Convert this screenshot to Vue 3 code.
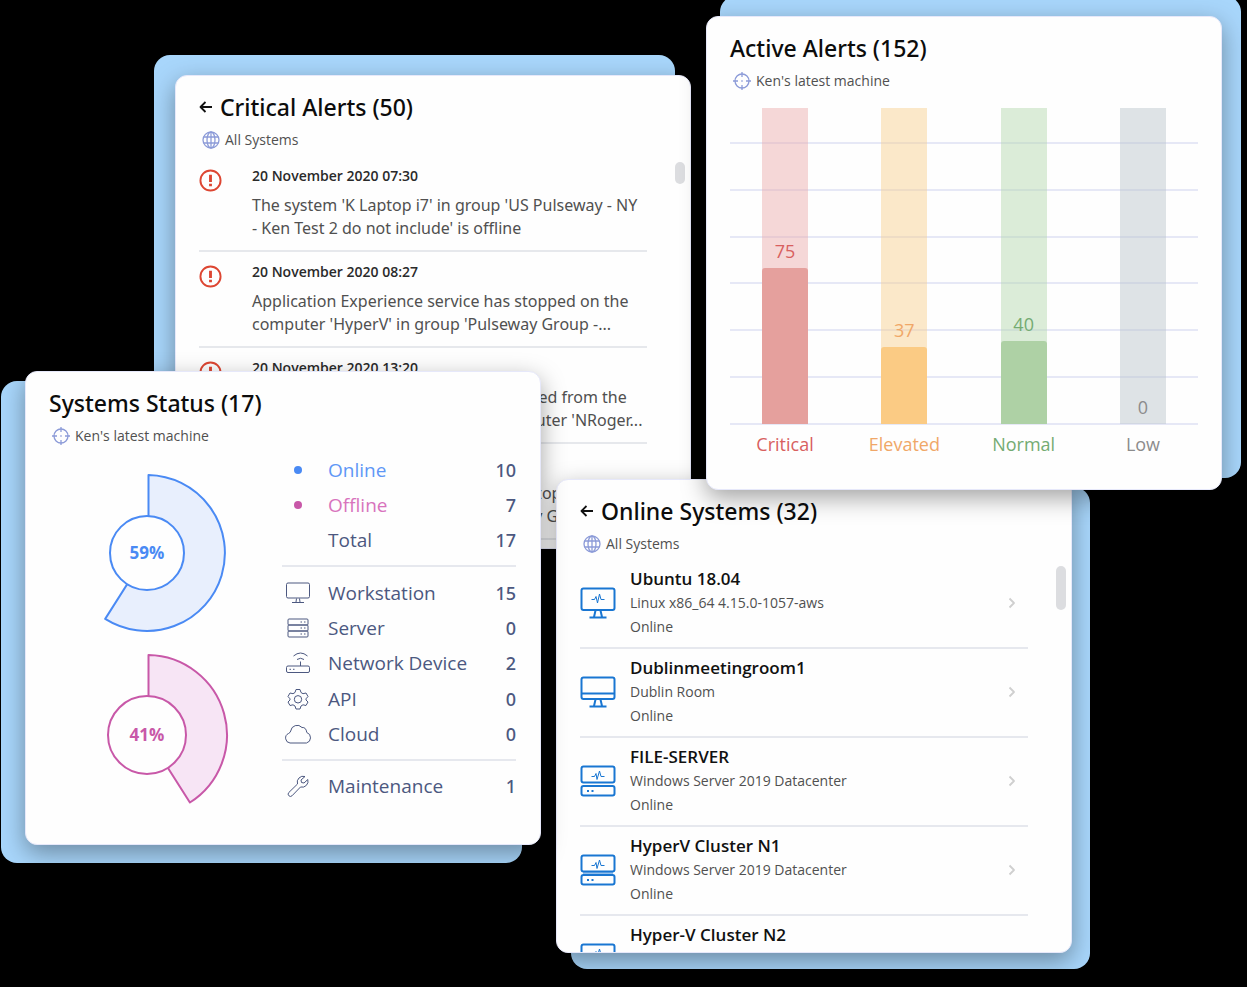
<script setup>
const alerts = [
  { time: '20 November 2020 07:30', text: "The system 'K Laptop i7' in group 'US Pulseway - NY\n- Ken Test 2 do not include' is offline" },
  { time: '20 November 2020 08:27', text: "Application Experience service has stopped on the\ncomputer 'HyperV' in group 'Pulseway Group -..." },
  { time: '20 November 2020 13:20', text: "A removable disk has been disconnected from the\nmachine in Dublin Office on the computer 'NRoger..." },
  { time: '20 November 2020 14:05', text: "Windows Event Collector service has stopped on the\ncomputer 'Hyper-V' in group 'Pulseway Group -..." }
]

const systems = [
  { name: 'Ubuntu 18.04', detail: 'Linux x86_64 4.15.0-1057-aws', icon: 'pulse' },
  { name: 'Dublinmeetingroom1', detail: 'Dublin Room', icon: 'desktop' },
  { name: 'FILE-SERVER', detail: 'Windows Server 2019 Datacenter', icon: 'server' },
  { name: 'HyperV Cluster N1', detail: 'Windows Server 2019 Datacenter', icon: 'server' },
  { name: 'Hyper-V Cluster N2', detail: 'Windows Server 2019 Datacenter', icon: 'server' }
]

const total = 152
const levels = [
  { name: 'Critical', value: 75, key: 'critical' },
  { name: 'Elevated', value: 37, key: 'elevated' },
  { name: 'Normal', value: 40, key: 'normal' },
  { name: 'Low', value: 0, key: 'low' }
]

const groups = [
  { key: 'state', rows: [
    { name: 'Online', count: 10, icon: 'dot', tone: 'online' },
    { name: 'Offline', count: 7, icon: 'dot', tone: 'offline' },
    { name: 'Total', count: 17, icon: '', tone: '' }
  ] },
  { key: 'kind', rows: [
    { name: 'Workstation', count: 15, icon: 'workstation', tone: '' },
    { name: 'Server', count: 0, icon: 'server', tone: '' },
    { name: 'Network Device', count: 2, icon: 'network', tone: '' },
    { name: 'API', count: 0, icon: 'api', tone: '' },
    { name: 'Cloud', count: 0, icon: 'cloud', tone: '' }
  ] },
  { key: 'care', rows: [{ name: 'Maintenance', count: 1, icon: 'wrench', tone: '' }] }
]

function slice(percent, outer) {
  const a = (percent / 100) * Math.PI * 2
  const x = (81 + outer * Math.sin(a)).toFixed(1)
  const y = (82 - outer * Math.cos(a)).toFixed(1)
  return `M82.5 82V${82 - outer}A${outer} ${outer} 0 ${percent > 50 ? 1 : 0} 1 ${x} ${y}L81 82`
}

const rings = [
  { percent: 59, inner: 37, outer: 78, tone: 'online' },
  { percent: 41, inner: 39, outer: 80, tone: 'offline' }
].map(r => ({ ...r, path: slice(r.percent, r.outer) }))
</script>

<template>
  <main class="stage">
    <section class="card critical-card">
      <div class="sheet">
        <header class="head">
          <h2>
            <button type="button" class="back" aria-label="Back">
              <svg viewBox="0 0 14 14"><path d="M13 7H1.500M6.500 2L1.500 7L6.500 12" /></svg>
            </button>
            Critical Alerts (50)
          </h2>
          <p class="scope">
            <svg class="globe" viewBox="0 0 18 18"><circle cx="9" cy="9" r="8" /><ellipse cx="9" cy="9" rx="4" ry="8" /><path d="M9 1V17M1.600 6H16.400M1.600 12H16.400" /></svg>
            All Systems
          </p>
        </header>
        <ul class="list">
          <li v-for="a in alerts" :key="a.time" class="alert">
            <svg class="warn" viewBox="0 0 24 24"><circle cx="12" cy="12" r="10.500" /><path class="mark" d="M12 6V13.500M12 15.500V18" /></svg>
            <div>
              <time>{{ a.time }}</time>
              <p>{{ a.text }}</p>
            </div>
          </li>
        </ul>
        <span class="thumb"></span>
      </div>
    </section>

    <section class="card online-card">
      <div class="sheet">
        <header class="head">
          <h2>
            <button type="button" class="back" aria-label="Back">
              <svg viewBox="0 0 14 14"><path d="M13 7H1.500M6.500 2L1.500 7L6.500 12" /></svg>
            </button>
            Online Systems (32)
          </h2>
          <p class="scope">
            <svg class="globe" viewBox="0 0 18 18"><circle cx="9" cy="9" r="8" /><ellipse cx="9" cy="9" rx="4" ry="8" /><path d="M9 1V17M1.600 6H16.400M1.600 12H16.400" /></svg>
            All Systems
          </p>
        </header>
        <ul class="list">
          <li v-for="s in systems" :key="s.name" class="system">
            <svg class="device" viewBox="0 0 36 32">
              <template v-if="s.icon === 'server'">
                <rect x="1.500" y="1.500" width="33" height="16" rx="2" />
                <path v-if="s.name.startsWith('Hyper')" class="shade" d="M3 19.500H33" />
                <rect x="1.500" y="21" width="33" height="9.500" rx="2" />
                <path class="fine" d="M11.500 11.500H14.500L16 8.500L17 14.500L19.500 6L21 11.500H24.500" />
                <path d="M7 26H9M11.500 26H13.500" />
              </template>
              <template v-else>
                <rect x="1.500" y="1.500" width="33" height="21.500" rx="2" />
                <path d="M15.500 23.500L14 30M20.500 23.500L22 30M9.500 30.500H26.500" />
                <path v-if="s.icon === 'desktop'" d="M2 17.500H34" />
                <path v-else class="fine" d="M11.500 12.500H14.500L16 9.500L17.500 16L19.500 7L21 12.500H24.500" />
              </template>
            </svg>
            <div class="info">
              <h3>{{ s.name }}</h3>
              <p>{{ s.detail }}</p>
              <p>Online</p>
            </div>
            <button type="button" class="open" :aria-label="s.name">
              <svg viewBox="0 0 8 12"><path d="M1.500 1.500L6 6L1.500 10.500" /></svg>
            </button>
          </li>
        </ul>
        <span class="thumb tall"></span>
      </div>
    </section>

    <section class="card status-card">
      <div class="sheet">
        <header class="head">
          <h2>Systems Status (17)</h2>
          <p class="scope">
            <svg class="target" viewBox="0 0 18 18"><circle cx="9" cy="9" r="7" /><path d="M9 0V5M9 13V18M0 9H5M13 9H18M8.300 9H9.700" /></svg>
            Ken's latest machine
          </p>
        </header>
        <div class="status">
          <div class="rings">
            <svg v-for="r in rings" :key="r.tone" class="ring" :class="r.tone" viewBox="0 0 164 164">
              <path :d="r.path" />
              <circle cx="81" cy="82" :r="r.inner" />
              <text x="81" y="88" text-anchor="middle">{{ r.percent }}%</text>
            </svg>
          </div>
          <div class="counts">
            <ul v-for="g in groups" :key="g.key" :class="g.key">
              <li v-for="row in g.rows" :key="row.name" :class="row.tone">
                <svg viewBox="0 0 28 28">
                  <circle v-if="row.icon === 'dot'" class="dot" cx="14" cy="14" r="4" />
                  <template v-else-if="row.icon === 'workstation'">
                    <rect x="2.500" y="4" width="23" height="15" rx="1.500" />
                    <path d="M12.500 19.500L12 23M15.500 19.500L16 23M8 23.500H20" />
                  </template>
                  <template v-else-if="row.icon === 'server'">
                    <rect x="4" y="5" width="20" height="6" rx="1" />
                    <rect x="4" y="11" width="20" height="6" rx="1" />
                    <rect x="4" y="17" width="20" height="6" rx="1" />
                    <path d="M16.500 8H18M20 8H21.500M16.500 14H18M20 14H21.500M16.500 20H18M20 20H21.500" />
                  </template>
                  <template v-else-if="row.icon === 'network'">
                    <rect x="2.500" y="17" width="23" height="6.500" rx="1.500" />
                    <path d="M16.500 17V12.500M13 10.500Q16.500 8 20 10.500M9.500 7Q16.500 1 23.500 7M5.500 20.300H7M9 20.300H10.500" />
                  </template>
                  <template v-else-if="row.icon === 'api'">
                    <path d="M12 4.500H16L17 7.500L19 8.700L22 8L24 11.500L22 13.800V15L24 17L22 20.500L19 19.800L17 21L16 24H12L11 21L9 19.800L6 20.500L4 17L6 15V13.800L4 11.500L6 8L9 8.700L11 7.500Z" />
                    <circle cx="14" cy="14.300" r="3.700" />
                  </template>
                  <path v-else-if="row.icon === 'cloud'" d="M6 23A5 5 0 0 1 4.500 13.500Q6.500 12.500 6.700 11A6.500 6.500 0 0 1 18 7.500Q22 7 22.800 12.500A5.500 5.500 0 0 1 22.500 23Z" />
                  <path v-else-if="row.icon === 'wrench'" d="M21 4.500A6 6 0 0 0 13.500 12L4.800 20.500A2.300 2.300 0 0 0 8 23.800L16.500 15A6 6 0 0 0 23.800 7.500L20 11L17.500 10.500L17 8Z" />
                </svg>
                <span>{{ row.name }}</span>
                <b>{{ row.count }}</b>
              </li>
            </ul>
          </div>
        </div>
      </div>
    </section>

    <section class="card active-card">
      <div class="sheet">
        <header class="head">
          <h2>Active Alerts (152)</h2>
          <p class="scope">
            <svg class="target" viewBox="0 0 18 18"><circle cx="9" cy="9" r="7" /><path d="M9 0V5M9 13V18M0 9H5M13 9H18M8.300 9H9.700" /></svg>
            Ken's latest machine
          </p>
        </header>
        <div class="chart">
          <div class="lines"><i v-for="n in 7" :key="n"></i></div>
          <div v-for="l in levels" :key="l.key" class="column" :class="l.key">
            <div class="track">
              <span class="value">{{ l.value }}</span>
              <div class="fill" :style="{ height: (l.value / total) * 100 + '%' }"></div>
            </div>
            <span class="label">{{ l.name }}</span>
          </div>
        </div>
      </div>
    </section>
  </main>
</template>

<style>
body {
  margin: 0;
  background: #000;
}
</style>

<style scoped>
.stage {
  position: relative;
  min-height: 100vh;
  overflow: hidden;
  font-family: "Open Sans", "Noto Sans", sans-serif;
  color: #505050;
}
h2, h3, p, ul {
  margin: 0;
  padding: 0;
}
ul {
  list-style: none;
}
button {
  border: 0;
  padding: 0;
  background: none;
  cursor: pointer;
}
svg {
  display: block;
  flex: none;
  fill: none;
  stroke: currentColor;
  stroke-linejoin: round;
}
/* Overlapping cards, each with a blue plate set off behind it */
.card {
  position: absolute;
  width: 516px;
  height: 474px;
  isolation: isolate;
}
.card::before {
  content: "";
  position: absolute;
  z-index: -1;
  border-radius: 16px;
  background: #a8d6fb;
}
.critical-card { left: 175px; top: 75px; }
.critical-card::before { inset: -20px 16px 16px -21px; }
.online-card { left: 556px; top: 479px; }
.online-card::before { inset: 8px -18px -16px 15px; }
.status-card { left: 25px; top: 371px; }
.status-card::before { inset: 10px 19px -18px -24px; }
.active-card { left: 706px; top: 16px; }
.active-card::before { inset: -20px -19px 12px 14px; }
.sheet {
  position: relative;
  box-sizing: border-box;
  height: 100%;
  overflow: hidden;
  padding: 16px 23px 0;
  border: 1px solid #e6e8fa;
  border-radius: 12px;
  background: #fefefe;
  box-shadow: 0 8px 24px rgba(0, 0, 0, 0.36);
}
.head h2 {
  display: flex;
  align-items: center;
  gap: 7px;
  font-family: "Noto Sans", sans-serif;
  font-size: 23px;
  font-weight: 500;
  line-height: 30px;
  color: #0c0c0c;
}
.back {
  width: 14px;
  height: 14px;
  color: #111;
}
.back svg {
  stroke-width: 1.8;
}
.scope {
  display: flex;
  align-items: center;
  gap: 5px;
  margin: 8px 0 6px;
  padding-left: 3px;
  font-size: 14px;
  line-height: 20px;
}
.scope svg {
  width: 18px;
  height: 18px;
  color: #8c9bd8;
  stroke-width: 1.3;
}
.list {
  margin-right: 20px;
}
.alert {
  display: flex;
  gap: 30px;
  padding: 11px 0 10px;
  border-bottom: 2px solid #e6e8ec;
}
.warn {
  width: 23px;
  height: 23px;
  margin-top: 2px;
  color: #dd4632;
  stroke-width: 2;
}
.warn .mark {
  stroke-width: 3;
}
.alert time {
  display: block;
  font-size: 14px;
  font-weight: 600;
  line-height: 18px;
  color: #2a2a2a;
}
.alert p {
  margin-top: 9px;
  font-family: "Noto Sans", sans-serif;
  font-size: 16px;
  line-height: 23px;
  white-space: pre;
}
.thumb {
  position: absolute;
  top: 86px;
  right: 5px;
  width: 10px;
  height: 22px;
  border-radius: 5px;
  background: #dcdde0;
}
.thumb.tall {
  height: 44px;
}
.system {
  display: flex;
  align-items: center;
  padding: 7px 0 8px;
  border-bottom: 2px solid #e6e8ee;
}
.device {
  width: 36px;
  height: 32px;
  color: #1976d2;
  stroke-width: 2;
}
.device .fine {
  stroke-width: 1;
}
.device .shade {
  stroke-width: 3;
  opacity: 0.45;
}
.info {
  flex: 1;
  margin-left: 14px;
  font-size: 14px;
  line-height: 24px;
}
.info h3 {
  font-size: 17px;
  font-weight: 600;
  line-height: 24px;
  color: #111;
}
.open {
  width: 8px;
  height: 12px;
  margin-right: 12px;
  color: #cfcfcf;
}
.open svg {
  stroke-width: 1.8;
}
.status {
  display: flex;
  justify-content: space-between;
}
.rings {
  display: flex;
  flex-direction: column;
  gap: 18px;
  margin: 19px 0 0 17px;
}
.ring {
  width: 164px;
  height: 164px;
  stroke-width: 2;
}
.ring circle {
  fill: #fefefe;
}
.ring text {
  stroke: none;
  fill: currentColor;
  font-size: 17px;
  font-weight: 700;
}
.ring.online path { fill: #e8effd; }
.ring.offline path { fill: #f7e5f5; }
.ring.online { color: #4a8af4; }
.ring.offline { color: #c858a8; }
.counts {
  width: 234px;
  margin-right: 1px;
  color: #4c5880;
}
.counts ul {
  display: grid;
  grid-auto-rows: 1fr;
  padding-bottom: 7px;
  margin-bottom: 8px;
  border-bottom: 2px solid #e6e8ee;
}
.counts .state { height: 106px; }
.counts .kind { height: 177px; }
.counts .care { height: 34px; border-bottom: 0; }
.counts li {
  display: flex;
  align-items: center;
  font-size: 19px;
}
.counts svg {
  width: 28px;
  height: 28px;
  margin: 0 16px 0 2px;
}
.counts b {
  margin-left: auto;
  font-family: "Noto Sans", sans-serif;
  font-size: 18px;
  font-weight: 500;
}
.counts .dot {
  fill: currentColor;
  stroke: none;
}
.counts .online span { color: #5f97f6; }
.counts .offline span { color: #d873bd; }
.counts .online svg { color: #4a8af4; }
.counts .offline svg { color: #c858a8; }
.chart {
  position: relative;
  display: flex;
  justify-content: space-between;
  margin-top: 17px;
  padding: 0 32px;
}
.lines {
  position: absolute;
  top: 34px;
  left: 0;
  right: 0;
  height: 283px;
  display: flex;
  flex-direction: column;
  justify-content: space-between;
}
.lines i {
  height: 2px;
  background: #e6e8f6;
}
.column {
  position: relative;
  display: flex;
  flex-direction: column;
  align-items: center;
  width: 46px;
  font-size: 18px;
}
.track {
  display: flex;
  flex-direction: column;
  justify-content: flex-end;
  align-self: stretch;
  height: 316px;
  text-align: center;
}
.value {
  line-height: 34px;
}
.fill {
  border-radius: 3px 3px 0 0;
}
.label {
  margin-top: 8px;
  line-height: 24px;
}
.critical { color: #d8605f; }
.critical .track { background: rgba(236, 168, 168, 0.45); }
.critical .fill { background: #e5a09d; }
.elevated { color: #f0a768; }
.elevated .track { background: rgba(248, 207, 138, 0.45); }
.elevated .fill { background: #fbcb84; }
.normal { color: #74ab72; }
.normal .track { background: rgba(178, 215, 170, 0.45); }
.normal .fill { background: #aed1a5; }
.low { color: #8c8c8c; }
.low .track { background: rgba(184, 196, 202, 0.45); }
</style>
